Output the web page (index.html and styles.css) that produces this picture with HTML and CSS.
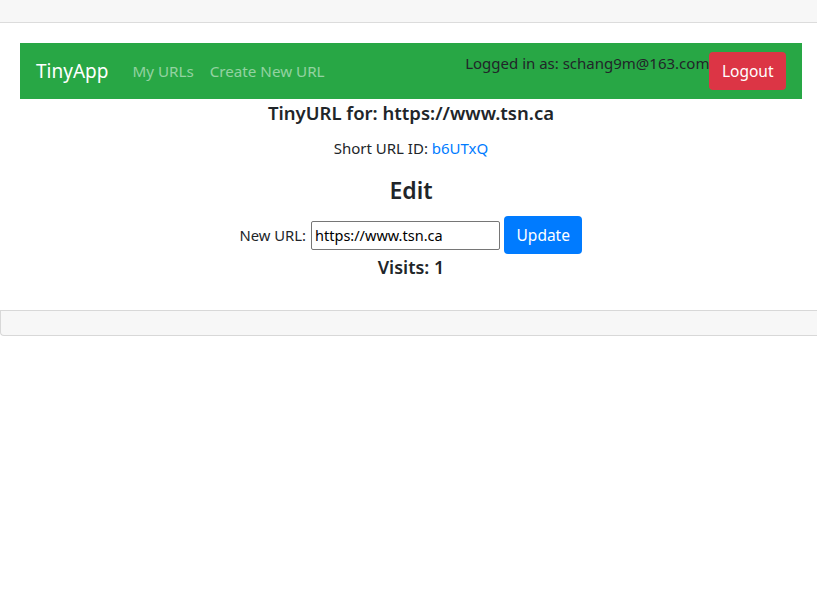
FILE: index.html
```html
<!DOCTYPE html>
<html>
<head>
<meta charset="utf-8">
<link rel="stylesheet" href="styles.css">
</head>
<body>
<div class="card">
  <div class="card-header"></div>
  <div class="card-body">
    <nav class="navbar">
      <a class="brand">TinyApp</a>
      <div class="links">
        <a class="nav-link">My URLs</a>
        <a class="nav-link">Create New URL</a>
      </div>
      <div class="user">
        <span class="logged">Logged in as: schang9m@163.com</span>
        <button class="btn btn-danger">Logout</button>
      </div>
    </nav>
    <h3 class="title">TinyURL for: https://www.tsn.ca</h3>
    <p class="short">Short URL ID: <a class="id">b6UTxQ</a></p>
    <h2 class="edit">Edit</h2>
    <form class="form">
      <label class="lbl">New URL:</label>
      <input class="url" type="text" value="https://www.tsn.ca">
      <button class="btn btn-primary" type="button">Update</button>
    </form>
    <h3 class="visits">Visits: 1</h3>
  </div>
  <div class="card-footer"></div>
</div>
</body>
</html>
```
FILE: styles.css
```css
* { box-sizing: border-box; }
html, body { margin: 0; padding: 0; background: #fff; }
body {
  font-family: "Noto Sans", "Open Sans", sans-serif;
  font-size: 16px;
  color: #212529;
  line-height: 1.5;
}
.card {
  width: 840px;
  border-radius: 0 0 4px 4px;
}
.card-header {
  height: 23px;
  background: #f7f7f7;
  border-bottom: 1px solid #dcdcdc;
}
.card-body {
  padding: 20px 15px 30px 20px;
  width: 817px;
  text-align: center;
}
.navbar {
  background: #28a745;
  height: 56px;
  display: flex;
  align-items: center;
  padding: 0 16px;
  text-align: left;
}
.brand {
  color: #fff;
  font-size: 19px;
  margin-right: 24px;
}
.links { display: flex; gap: 16px; font-size: 15.2px; }
.nav-link { color: rgba(255,255,255,0.5); }
.user { margin-left: auto; display: flex; align-items: flex-start; height: 38px; }
.logged { font-size: 15px; margin-top: 0; margin-right: 0; }
.btn {
  border: none;
  border-radius: 4px;
  color: #fff;
  font-family: inherit;
  font-size: 15.5px;
  height: 38px;
  padding: 0 12.5px;
}
.btn-danger { background: #dc3545; }
.btn-primary { background: #007bff; }
.title { font-size: 18.5px; font-weight: 600; margin: 0; line-height: 28px; }
.short { font-size: 15px; margin: 10px 0 0; line-height: 22px; }
.id { color: #007bff; }
.edit { font-size: 23px; font-weight: 600; margin: 14px 0 0; line-height: 34px; }
.form { display: flex; justify-content: center; align-items: center; margin-top: 9px; }
.lbl { font-size: 14.8px; margin-right: 5px; }
.url {
  width: 189px;
  height: 29px;
  border: 1px solid #767676;
  border-radius: 2px;
  font-family: inherit;
  font-size: 14.5px;
  padding: 0 3px;
  margin-right: 4px;
  color: #000;
}
.visits { font-size: 18px; font-weight: 600; margin: 0; line-height: 26px; }
.card-footer {
  height: 26px;
  background: #f7f7f7;
  border-top: 1px solid #d8d8d8;
  border-bottom: 1px solid #d8d8d8;
  border-left: 1px solid #d8d8d8;
  border-radius: 0 0 0 4px;
}
```
